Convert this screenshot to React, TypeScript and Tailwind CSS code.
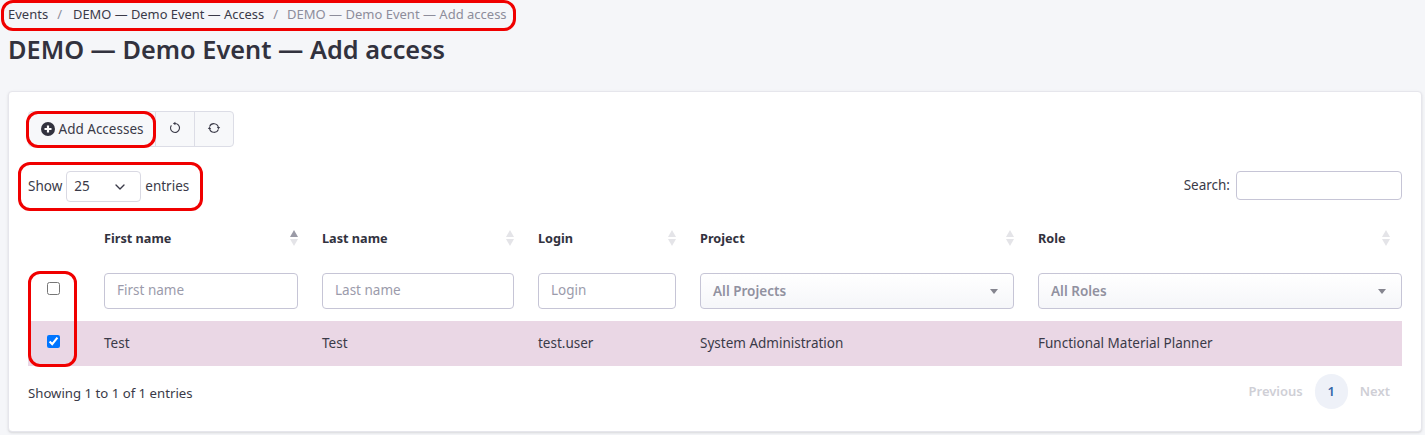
import React from 'react';
import { ChevronDown } from 'lucide-react';

const SortArrows = ({ active = false }: { active?: boolean }) => (
  <svg width="8" height="16" viewBox="0 0 8 16" className="shrink-0">
    <path d="M4 0L8 7H0Z" fill={active ? '#9a9aa6' : '#e4e4e8'} />
    <path d="M4 16L0 9H8Z" fill="#e4e4e8" />
  </svg>
);

const HeadCell = ({ label, active = false }: { label: string; active?: boolean }) => (
  <th className="h-[46px] px-3 text-left align-middle">
    <div className="flex items-center justify-between text-[12.7px] font-bold text-[#32323e]">
      <span className="pt-0.5">{label}</span>
      <SortArrows active={active} />
    </div>
  </th>
);

const FilterInput = ({ placeholder }: { placeholder: string }) => (
  <td className="px-3 align-middle">
    <input
      placeholder={placeholder}
      className="h-9 w-full rounded border border-[#c6c5d6] bg-white px-3 pb-0.5 text-[13.5px] placeholder:text-[#9b9bab]"
    />
  </td>
);

const SelectBox = ({ label }: { label: string }) => (
  <div className="flex h-9 w-full items-center justify-between rounded border border-[#c6c5d6] bg-gradient-to-b from-white to-[#f5f6f9] px-3 text-[13.5px] font-semibold text-[#9191a0]">
    <span>{label}</span>
    <span className="mr-[3px] h-0 w-0 border-x-[4px] border-t-[5px] border-x-transparent border-t-[#85858f]" />
  </div>
);

const Mark = ({ className }: { className: string }) => (
  <div className={`pointer-events-none absolute rounded-[12px] border-[3px] border-[#f00000] ${className}`} />
);

export default function App() {
  return (
    <div className="relative h-[435px] w-full overflow-hidden bg-[#f5f6f9] text-[13.5px] text-[#3a3a48] font-['Noto_Sans',sans-serif]">
      {/* Breadcrumb */}
      <nav className="flex h-[29px] items-center pl-2 text-[13px] leading-none">
        <span>Events</span>
        <span className="pl-[9px] pr-[11px] text-[#8d8d9b]">/</span>
        <span className="text-[12.9px]">DEMO — Demo Event — Access</span>
        <span className="px-[9px] text-[#8d8d9b]">/</span>
        <span className="text-[#8d8d9b]">DEMO — Demo Event — Add access</span>
      </nav>
      <h1 className="pl-2 text-[25.3px] leading-[40px] font-semibold text-[#32323e]">DEMO — Demo Event — Add access</h1>

      {/* Card */}
      <div className="ml-2 mr-[3px] mt-[22px] h-[341px] rounded border border-[#e6e6ec] bg-white px-[19px] pt-[19px] shadow-sm">
        <div className="flex h-9 w-fit rounded border border-[#dcdde6] bg-[#f7f8fa]">
          <button className="flex w-[126px] items-center justify-center gap-1">
            <svg width="14" height="14" viewBox="0 0 14 14">
              <circle cx="7" cy="7" r="7" fill="#32323e" />
              <path d="M7 3.5v7M3.5 7h7" stroke="#fff" strokeWidth="2.2" />
            </svg>
            Add Accesses
          </button>
          <button className="flex w-[39px] items-center justify-center border-l border-[#dcdde6] pb-0.5">
            <svg width="14" height="14" viewBox="0 0 14 14" fill="none" stroke="#3a3a48" strokeWidth="1.1">
              <path d="M7 2.5a4.5 4.5 0 1 1-3.6 1.8" />
              <path d="M7.4 0.8V4.2L4.9 2.5Z" fill="#3a3a48" stroke="none" />
            </svg>
          </button>
          <button className="flex w-[39px] items-center justify-center border-l border-[#dcdde6] pb-0.5">
            <svg width="14" height="14" viewBox="0 0 14 14" fill="none" stroke="#3a3a48" strokeWidth="1.1">
              <path d="M2.6 5.6a4.6 4.6 0 0 1 8.8 .8" />
              <path d="M11.4 8.4a4.6 4.6 0 0 1-8.8-.8" />
              <path d="M9.8 6H13.2L11.5 8.2Z" fill="#3a3a48" stroke="none" />
              <path d="M0.8 8H4.2L2.5 5.8Z" fill="#3a3a48" stroke="none" />
            </svg>
          </button>
        </div>

        <div className="mt-6 flex items-start justify-between">
          <div className="flex h-[31px] items-center gap-1">
            <span>Show</span>
            <div className="flex h-[31px] w-[75px] items-center justify-between rounded border border-[#d9d9e3] pl-[7px] pr-3">
              <span>25</span>
              <ChevronDown size={16} strokeWidth={2} />
            </div>
            <span>entries</span>
          </div>
          <div className="flex h-[29px] items-center gap-1.5">
            <span>Search:</span>
            <input className="h-[29px] w-[166px] rounded border border-[#c6c5d6] bg-white" />
          </div>
        </div>

        <table className="mt-[13px] w-full table-fixed border-collapse">
          <colgroup>
            <col className="w-[64px]" />
            <col className="w-[218px]" />
            <col className="w-[216px]" />
            <col className="w-[162px]" />
            <col className="w-[338px]" />
            <col />
          </colgroup>
          <thead>
            <tr>
              <th className="h-[46px]" />
              <HeadCell label="First name" active />
              <HeadCell label="Last name" />
              <HeadCell label="Login" />
              <HeadCell label="Project" />
              <HeadCell label="Role" />
            </tr>
          </thead>
          <tbody>
            <tr className="h-[60px]">
              <td className="pb-[6px] pl-[19px]">
                <input type="checkbox" className="block h-[13px] w-[13px] accent-[#0075ff]" />
              </td>
              <FilterInput placeholder="First name" />
              <FilterInput placeholder="Last name" />
              <FilterInput placeholder="Login" />
              <td className="px-3 align-middle">
                <SelectBox label="All Projects" />
              </td>
              <td className="pl-3 align-middle">
                <SelectBox label="All Roles" />
              </td>
            </tr>
            <tr className="h-[45px] bg-[#ead7e5]">
              <td className="pb-1 pl-[19px]">
                <input type="checkbox" defaultChecked className="block h-[13px] w-[13px] accent-[#0075ff]" />
              </td>
              <td className="px-3">Test</td>
              <td className="px-3">Test</td>
              <td className="px-3">test.user</td>
              <td className="px-3">System Administration</td>
              <td className="px-3">Functional Material Planner</td>
            </tr>
          </tbody>
        </table>

        <div className="mt-2 flex items-center justify-between">
          <span className="pt-1 text-[13.2px]">Showing 1 to 1 of 1 entries</span>
          <div className="flex items-center text-[13px] font-semibold text-[#cfcfd6]">
            <span>Previous</span>
            <span className="mx-3 flex h-[35px] w-[33px] items-center justify-center rounded-full bg-[#eef1f8] text-[#3566a8]">1</span>
            <span className="mr-3">Next</span>
          </div>
        </div>
      </div>

      {/* Red annotation outlines */}
      <Mark className="left-px top-0 h-[31px] w-[515px]" />
      <Mark className="left-[26px] top-[111px] h-[37px] w-[130px]" />
      <Mark className="left-[18px] top-[162px] h-[49px] w-[185px]" />
      <Mark className="left-[28px] top-[271px] h-[96px] w-[49px]" />
    </div>
  );
}
